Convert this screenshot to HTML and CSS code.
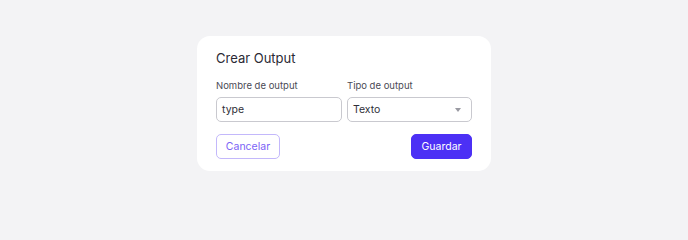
FILE: index.html
```html
<!DOCTYPE html>
<html lang="es">
<head>
<meta charset="utf-8">
<title>Crear Output</title>
<link rel="stylesheet" href="styles.css">
</head>
<body>
<div class="card">
  <h2 class="title">Crear Output</h2>
  <div class="fields">
    <label class="field">
      <span class="label">Nombre de output</span>
      <span class="input">type</span>
    </label>
    <label class="field">
      <span class="label">Tipo de output</span>
      <span class="input select">Texto<span class="caret"></span></span>
    </label>
  </div>
  <div class="actions">
    <button class="btn btn-outline">Cancelar</button>
    <button class="btn btn-primary">Guardar</button>
  </div>
</div>
</body>
</html>
```

FILE: styles.css
```css
* { box-sizing: border-box; }
html, body { margin: 0; }
body {
  background: #f3f3f5;
  font-family: "Inter", "Open Sans", sans-serif;
  display: flex;
  justify-content: center;
  padding-top: 36px;
}
.card {
  width: 294px;
  height: 135px;
  background: #ffffff;
  border-radius: 13px;
  padding: 12px 19px 12px 19px;
  display: flex;
  flex-direction: column;
}
.title {
  margin: 0;
  font-size: 13px;
  font-weight: 400;
  line-height: 20px;
  color: #2b2a35;
}
.fields {
  margin-top: 11px;
  display: grid;
  grid-template-columns: 126px 125px;
  column-gap: 5px;
}
.field { display: flex; flex-direction: column; }
.label {
  font-size: 9.5px;
  line-height: 13px;
  color: #4a4a55;
  margin-bottom: 5px;
}
.input {
  height: 25px;
  border: 1px solid #c9c9cf;
  border-radius: 5px;
  padding: 0 5px;
  font-size: 10.5px;
  color: #2f2f38;
  display: flex;
  align-items: center;
}
.select { justify-content: space-between; padding-right: 10px; }
.caret {
  width: 0; height: 0;
  border-left: 3.5px solid transparent;
  border-right: 3.5px solid transparent;
  border-top: 4px solid #9a9aa2;
}
.actions {
  margin-top: 12px;
  display: flex;
  justify-content: space-between;
}
.btn {
  height: 25px;
  border-radius: 5px;
  font-family: inherit;
  font-size: 10.5px;
  padding: 0;
  cursor: pointer;
}
.btn-outline {
  width: 64px;
  background: #fff;
  border: 1px solid #c3b8fb;
  color: #7b63f6;
}
.btn-primary {
  width: 61px;
  background: #4c30f5;
  border: 1px solid #4c30f5;
  color: #fff;
}
```
